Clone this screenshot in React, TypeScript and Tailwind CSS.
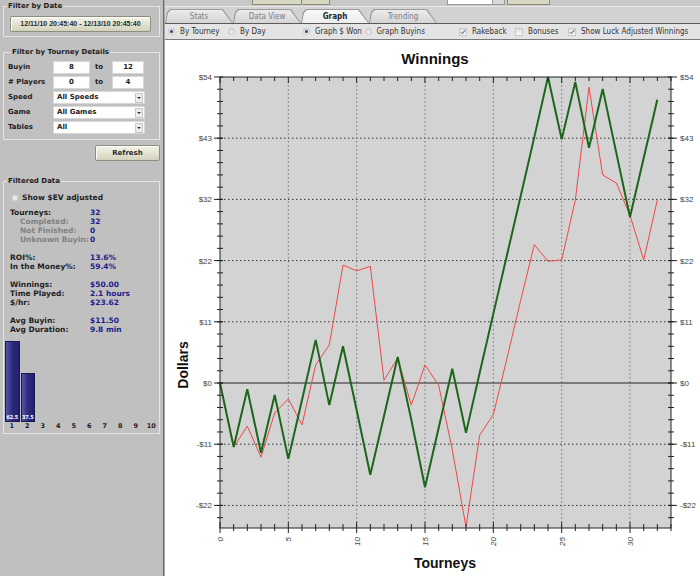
import React from "react";

// Cumulative winnings per tourney (dollars). Green = luck adjusted, red = actual.
const LUCK = [
  0, -11.3, -1.1, -12.3, -2.1, -13.4, -3.0, 7.6, -3.9, 6.5, -4.8, -16.2, -5.8, 4.6, -6.5, -18.4, -7.9,
  2.5, -8.8, 1.8, 12.2, 22.6, 33.0, 43.4, 54.0, 43.0, 53.1, 41.5, 51.9, 40.6, 29.3, 39.7, 50.0,
];
const ACTUAL = [
  0, -11.3, -7.6, -13.1, -5.3, -2.8, -7.4, 3.2, 6.7, 20.8, 19.8, 20.6, 0.5, 4.4, -3.9, 3.2, -0.4,
  -11.8, -25.4, -9.2, -5.6, 4.4, 14.6, 24.4, 21.5, 21.7, 32.3, 52.2, 36.7, 35.3, 29.6, 21.7, 32.3,
];

const PLACES = [
  { place: 1, pct: 62.5 },
  { place: 2, pct: 37.5 },
  { place: 3, pct: 0 },
  { place: 4, pct: 0 },
  { place: 5, pct: 0 },
  { place: 6, pct: 0 },
  { place: 7, pct: 0 },
  { place: 8, pct: 0 },
  { place: 9, pct: 0 },
  { place: 10, pct: 0 },
];

const STATS: Array<{ label: string; value?: string; sub?: boolean; gap?: boolean }> = [
  { label: "Tourneys:", value: "32" },
  { label: "Completed:", value: "32", sub: true },
  { label: "Not Finished:", value: "0", sub: true },
  { label: "Unknown Buyin:", value: "0", sub: true },
  { label: "ROI%:", value: "13.6%", gap: true },
  { label: "In the Money%:", value: "59.4%" },
  { label: "Winnings:", value: "$50.00", gap: true },
  { label: "Time Played:", value: "2.1 hours" },
  { label: "$/hr:", value: "$23.62" },
  { label: "Avg Buyin:", value: "$11.50", gap: true },
  { label: "Avg Duration:", value: "9.8 min" },
];

function GroupBox({ title, className = "", children }: { title: string; className?: string; children: React.ReactNode }) {
  return (
    <fieldset className={`mx-[3px] border border-[#e4e4e4] ${className}`}>
      <legend className="ml-[3px] px-[1px] text-[7px] leading-[9px] font-bold text-[#1e1e1e]">{title}</legend>
      {children}
    </fieldset>
  );
}

function BeigeButton({ className = "", children }: { className?: string; children: React.ReactNode }) {
  return (
    <div
      className={`flex items-center justify-center rounded-[2px] border border-[#8e8e80] bg-gradient-to-b from-[#f4f4e8] to-[#d2d2bc] text-[#2a2a2a] shadow-[inset_1px_1px_0_#fff] ${className}`}
    >
      {children}
    </div>
  );
}

function TextBox({ value, className = "" }: { value: string; className?: string }) {
  return (
    <div className={`flex items-center justify-center border border-[#d8d8d8] bg-white text-[7px] text-[#222] ${className}`}>
      {value}
    </div>
  );
}

function Select({ value }: { value: string }) {
  return (
    <div className="flex h-[13px] w-[92px] items-center border border-[#d8d8d8] bg-white">
      <span className="flex-1 pl-[3px] text-[7px] font-bold text-[#222]">{value}</span>
      <span className="mr-[1px] flex h-[10px] w-[8px] items-center justify-center border border-[#c8c8c8] bg-[#ececec]">
        <span className="h-0 w-0 border-x-[2px] border-t-[2px] border-x-transparent border-t-[#333]" />
      </span>
    </div>
  );
}

function LeftPanel() {
  const maxPct = Math.max(...PLACES.map((p) => p.pct));
  return (
    <div className="flex w-[163px] shrink-0 flex-col bg-[#c0c0c0] font-['DejaVu_Sans',sans-serif] text-[7px] font-bold text-[#1e1e1e]">
      <GroupBox title="Filter by Date" className="mt-[2px] pt-[5px] pb-[4px]">
        <BeigeButton className="ml-[6px] h-[16px] w-[141px] font-['Liberation_Sans',sans-serif] text-[7px]">
          12/11/10 20:45:40 - 12/13/10 20:45:40
        </BeigeButton>
      </GroupBox>

      <GroupBox title="Filter by Tourney Details" className="mt-[11px] pt-[4px] pb-[5px] pl-[4px]">
        <div className="flex flex-col gap-[2px]">
          <div className="flex h-[13px] items-center">
            <span className="w-[45px]">Buyin</span>
            <TextBox value="8" className="h-[13px] w-[37px]" />
            <span className="w-[22px] pl-[5px]">to</span>
            <TextBox value="12" className="h-[13px] w-[32px]" />
          </div>
          <div className="flex h-[13px] items-center">
            <span className="w-[45px]"># Players</span>
            <TextBox value="0" className="h-[13px] w-[37px]" />
            <span className="w-[22px] pl-[5px]">to</span>
            <TextBox value="4" className="h-[13px] w-[32px]" />
          </div>
          <div className="flex h-[13px] items-center">
            <span className="w-[45px]">Speed</span>
            <Select value="All Speeds" />
          </div>
          <div className="flex h-[13px] items-center">
            <span className="w-[45px]">Game</span>
            <Select value="All Games" />
          </div>
          <div className="flex h-[13px] items-center">
            <span className="w-[45px]">Tables</span>
            <Select value="All" />
          </div>
        </div>
      </GroupBox>

      <BeigeButton className="mt-[5px] ml-[95px] h-[16px] w-[65px] text-[7px]">Refresh</BeigeButton>

      <GroupBox title="Filtered Data" className="mt-[16px] pt-[7px] pb-[1px]">
        <div className="flex h-[10px] items-center pl-[8px]">
          <span className="h-[6px] w-[6px] border border-[#d0d0d0] bg-[#e8e8e8]" />
          <span className="ml-[4px] text-[7.5px]">Show $EV adjusted</span>
        </div>

        <div className="mt-[5px] flex flex-col text-[7.5px]">
          {STATS.map((s) => (
            <div key={s.label} className={`flex h-[9px] items-center leading-[9px] ${s.gap ? "mt-[9px]" : ""}`}>
              <span className={`w-[86px] ${s.sub ? "pl-[16px] text-[#808080]" : "pl-[6px]"}`}>{s.label}</span>
              <span className="text-[#1c1c8c]">{s.value}</span>
            </div>
          ))}
        </div>

        <div className="mt-[2px] grid h-[86px] grid-cols-10 items-end">
          {PLACES.map((p) => (
            <div key={p.place} className="flex h-full items-end pl-[1px]">
              {p.pct > 0 && (
                <div
                  className="flex w-full items-end justify-center overflow-hidden border border-[#1a1850] bg-gradient-to-r from-[#5656a4] via-[#2c2a7c] to-[#232070]"
                  style={{ height: `${(p.pct / maxPct) * 81}px` }}
                >
                  <span className="font-['DejaVu_Sans_Condensed','Liberation_Sans',sans-serif] text-[5.5px] leading-[7px] tracking-[-0.2px] text-white">
                    {p.pct}
                  </span>
                </div>
              )}
            </div>
          ))}
        </div>
        <div className="grid h-[10px] grid-cols-10 items-center">
          {PLACES.map((p) => (
            <span key={p.place} className="text-center text-[6.5px]">
              {p.place}
            </span>
          ))}
        </div>
      </GroupBox>
    </div>
  );
}

function Radio({ on }: { on?: boolean }) {
  return (
    <span className="flex h-[7px] w-[7px] items-center justify-center rounded-full border border-[#c4c4c4] bg-gradient-to-b from-[#d8d8d8] to-[#f4f4f4]">
      {on && <span className="h-[3px] w-[3px] rounded-full bg-[#33446a]" />}
    </span>
  );
}

function Check({ on }: { on?: boolean }) {
  return (
    <span className="flex h-[8px] w-[8px] items-center justify-center border border-[#c8c8c8] bg-gradient-to-b from-[#e0e0e0] to-[#f8f8f8]">
      {on && (
        <svg width="6" height="6" viewBox="0 0 6 6">
          <path d="M0.8 3.2 L2.3 4.8 L5.3 0.9" fill="none" stroke="#4a5a7a" strokeWidth="1" />
        </svg>
      )}
    </span>
  );
}

function Option({ control, label, width }: { control: React.ReactNode; label: string; width: string }) {
  return (
    <div className={`flex items-center gap-[5px] ${width}`}>
      {control}
      <span>{label}</span>
    </div>
  );
}

const TAB_SHAPE = "[clip-path:polygon(0_100%,2px_3px,5px_0,calc(100%_-_10px)_0,100%_100%)]";

function Tab({ label, active }: { label: string; active?: boolean }) {
  return (
    <div className={`relative h-[14px] w-[68px] bg-[#9c9c9c] ${TAB_SHAPE}`}>
      <div
        className={`absolute inset-x-[1px] top-[1px] bottom-0 flex items-center justify-center ${TAB_SHAPE} ${
          active
            ? "bg-gradient-to-b from-[#fafafa] to-[#ececec] text-[8px] font-bold text-[#1e1e1e]"
            : "bg-gradient-to-b from-[#ececec] to-[#d4d4d4] text-[8px] text-[#808080]"
        }`}
      >
        {label}
      </div>
    </div>
  );
}

function WinningsChart() {
  const L = 220;
  const R = 671;
  const T = 77;
  const B = 528;
  const X = (i: number) => L + i * 13.667;
  const Y = (v: number) => 383 - v * 5.667;
  const majors = [54, 43.2, 32.4, 21.6, 10.8, 0, -10.8, -21.6];
  const minors: number[] = [];
  for (let k = -12; k <= 25; k++) {
    const v = k * 2.16;
    if (Y(v) <= B && Y(v) >= T) minors.push(v);
  }
  const xs = Array.from({ length: 34 }, (_, i) => i);
  const fmt = (v: number) => (v < 0 ? `-$${Math.round(-v)}` : `$${Math.round(v)}`);
  const pts = (d: number[]) => d.map((v, i) => `${X(i).toFixed(1)},${Y(v).toFixed(1)}`).join(" ");

  return (
    <svg width="535" height="536" viewBox="165 40 535 536" className="block" fontFamily="Liberation Sans, Arial, sans-serif">
      <text x="435" y="64" textAnchor="middle" fontSize="15" fontWeight="bold" fill="#111">
        Winnings
      </text>
      <rect x={L} y={T} width={R - L} height={B - T} fill="#d3d3d3" />

      {majors
        .filter((v) => v !== 0 && v !== 54)
        .map((v) => (
          <line key={`h${v}`} x1={L} x2={R} y1={Y(v)} y2={Y(v)} stroke="#333" strokeWidth="1" strokeDasharray="1.5 2.5" />
        ))}
      {[5, 10, 15, 20, 25, 30].map((i) => (
        <line key={`v${i}`} x1={X(i)} x2={X(i)} y1={T} y2={B} stroke="#777" strokeWidth="1" strokeDasharray="1.5 2.5" />
      ))}
      <line x1={L} x2={R} y1={383} y2={383} stroke="#222" strokeWidth="1" />

      <polyline points={pts(ACTUAL)} fill="none" stroke="#ee4848" strokeWidth="1" strokeLinejoin="round" />
      <polyline points={pts(LUCK)} fill="none" stroke="#1c661c" strokeWidth="2" strokeLinejoin="miter" />

      <rect x={L} y={T} width={R - L} height={B - T} fill="none" stroke="#222" strokeWidth="1" />

      {minors.map((v) => (
        <g key={`m${v}`} stroke="#222" strokeWidth="1">
          <line x1={L - 3} x2={L + 3} y1={Y(v)} y2={Y(v)} />
          <line x1={R - 3} x2={R + 3} y1={Y(v)} y2={Y(v)} />
        </g>
      ))}
      {majors.map((v) => (
        <g key={`M${v}`}>
          <line x1={L - 6} x2={L + 3} y1={Y(v)} y2={Y(v)} stroke="#222" strokeWidth="1" />
          <line x1={R - 3} x2={R + 6} y1={Y(v)} y2={Y(v)} stroke="#222" strokeWidth="1" />
          <text x={212} y={Y(v) + 3} textAnchor="end" fontSize="8" fill="#444">
            {fmt(v)}
          </text>
          <text x={680} y={Y(v) + 3} fontSize="8" fill="#444">
            {fmt(v)}
          </text>
        </g>
      ))}

      {xs.map((i) => {
        const major = i % 5 === 0;
        return (
          <g key={`x${i}`} stroke="#222" strokeWidth="1">
            <line x1={X(i)} x2={X(i)} y1={major ? B - 6 : B - 4} y2={major ? B + 5 : B + 3} />
            <line x1={X(i)} x2={X(i)} y1={T} y2={major ? T + 6 : T + 4} />
          </g>
        );
      })}
      {[0, 5, 10, 15, 20, 25, 30].map((i) => (
        <text
          key={`xl${i}`}
          transform={`translate(${X(i) + 3},537) rotate(-90)`}
          textAnchor="end"
          fontSize="8"
          fontStyle="italic"
          fill="#444"
        >
          {i}
        </text>
      ))}

      <text transform="translate(188,365) rotate(-90)" textAnchor="middle" fontSize="14" fontWeight="bold" fill="#111">
        Dollars
      </text>
      <text x="445" y="568" textAnchor="middle" fontSize="14" fontWeight="bold" fill="#111">
        Tourneys
      </text>
    </svg>
  );
}

export default function App() {
  return (
    <div className="flex h-[576px] w-[700px] overflow-hidden bg-[#c0c0c0]">
      <LeftPanel />
      <div className="w-[2px] shrink-0 border-l border-[#6a6a6a] bg-[#a8a8a8]" />

      <div className="flex min-w-0 flex-1 flex-col font-['DejaVu_Sans_Condensed','Liberation_Sans',sans-serif]">
        <div className="flex h-[6px] shrink-0 bg-[#c8c8c8]">
          <div className="ml-[87px] h-[5px] w-[50px] border-x border-b border-[#8a8a7a] bg-[#d8d8c0]" />
          <div className="ml-[1px] h-[5px] w-[27px] border-r border-b border-[#8a8a7a] bg-[#d8d8c0]" />
          <div className="ml-[117px] h-[5px] w-[46px] border-x border-b border-[#9a9a9a] bg-white" />
          <div className="h-[5px] w-[12px] border-r border-b border-[#9a9a9a] bg-[#d8d8d8]" />
          <div className="ml-[2px] h-[5px] w-[43px] border-x border-b border-[#8a8a7a] bg-[#d8d8c0]" />
        </div>
        <div className="flex h-[17px] shrink-0 items-end border-t border-[#e8e8e8] bg-[#d2d2d2]">
          <Tab label="Stats" />
          <Tab label="Data View" />
          <Tab label="Graph" active />
          <Tab label="Trending" />
        </div>
        <div className="h-[1px] shrink-0 bg-[#5a5a5a]" />
        <div className="flex h-[16px] shrink-0 items-center border-b border-[#7a7a7a] bg-[#e4e4e4] pl-[3px] text-[8px] text-[#333]">
          <Option control={<Radio on />} label="By Tourney" width="w-[60px]" />
          <Option control={<Radio />} label="By Day" width="w-[75px]" />
          <Option control={<Radio on />} label="Graph $ Won" width="w-[61.5px]" />
          <Option control={<Radio />} label="Graph Buyins" width="w-[94.5px]" />
          <Option control={<Check on />} label="Rakeback" width="w-[56px]" />
          <Option control={<Check />} label="Bonuses" width="w-[53px]" />
          <Option control={<Check on />} label="Show Luck Adjusted Winnings" width="flex-1" />
        </div>
        <div className="flex-1 bg-white">
          <WinningsChart />
        </div>
      </div>
    </div>
  );
}
